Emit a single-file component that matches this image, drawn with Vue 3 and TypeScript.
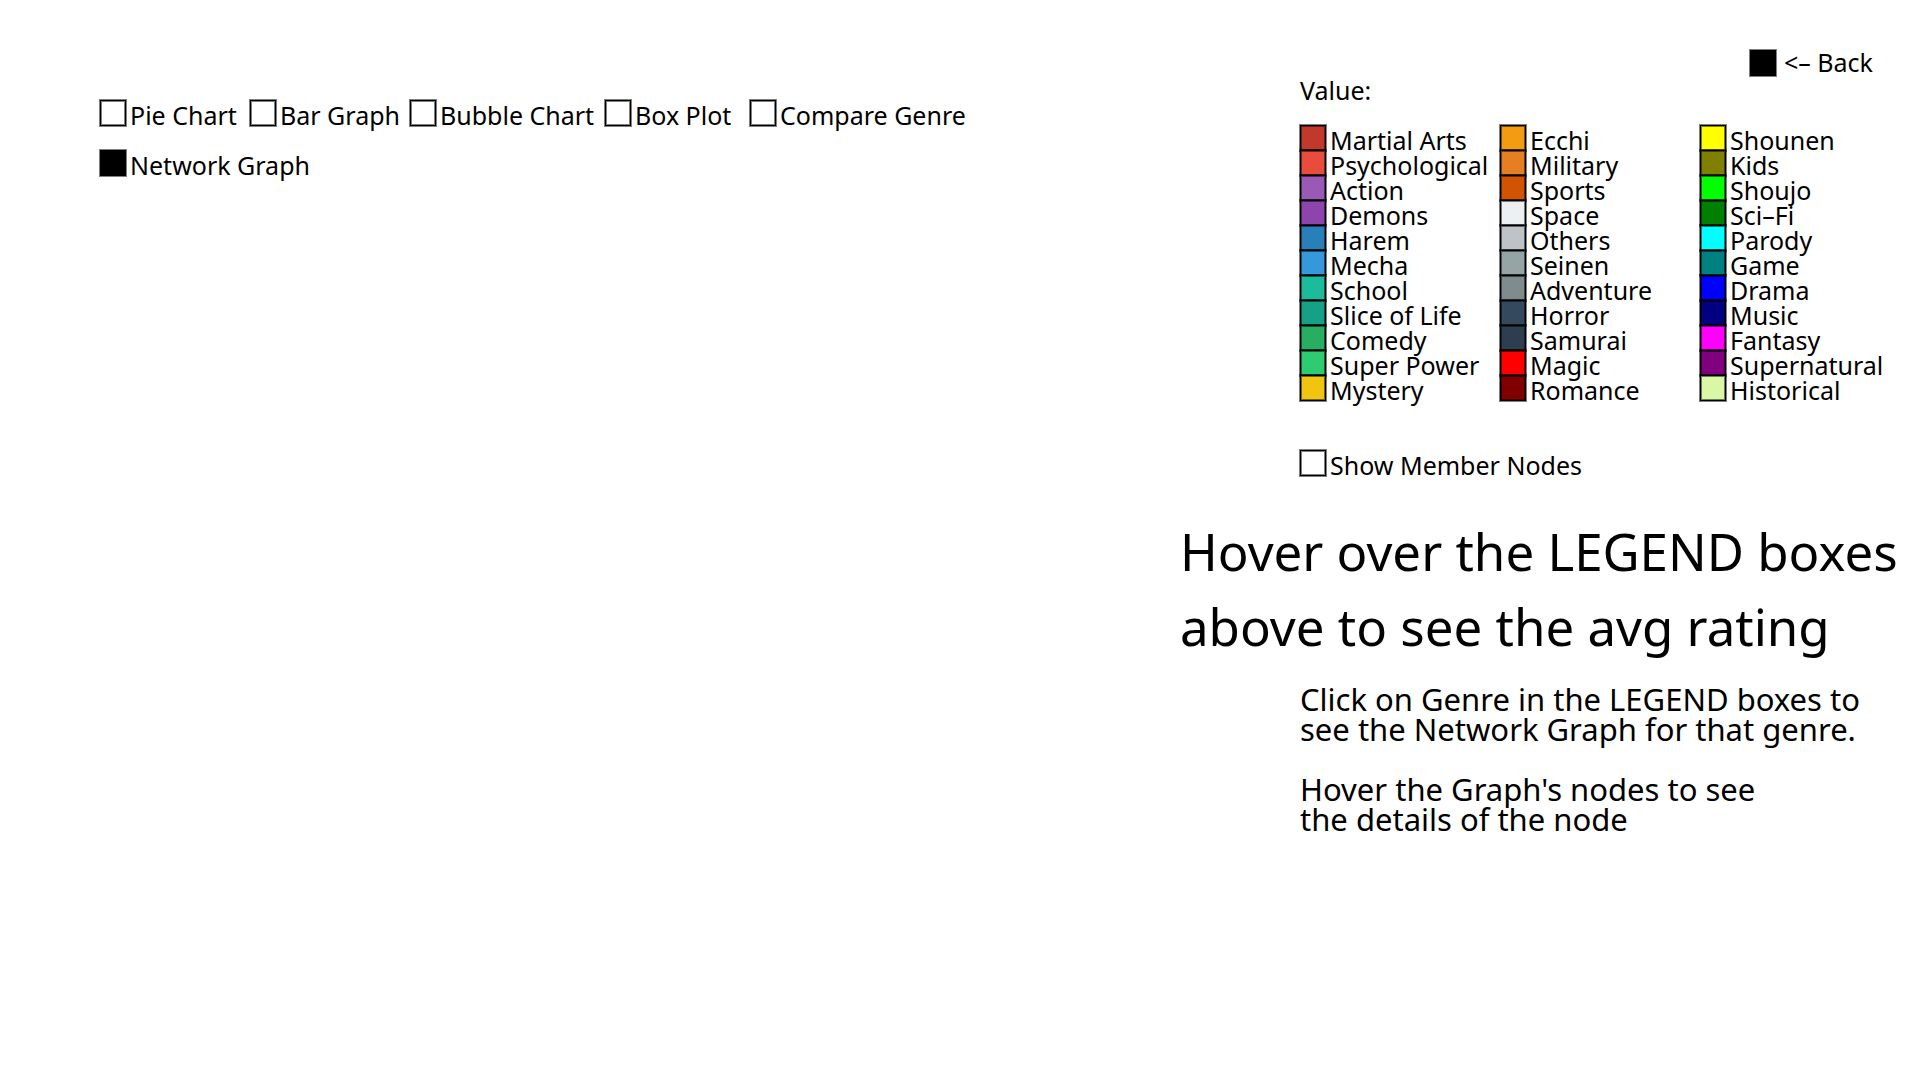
<script setup lang="ts">
import { ref } from 'vue'

interface Genre {
  name: string
  color: string
}

const charts = ['Pie Chart', 'Bar Graph', 'Bubble Chart', 'Box Plot', 'Compare Genre', 'Network Graph']
const chart = ref('Network Graph')
const showMembers = ref(false)
const selectedGenre = ref<string | null>(null)

const legend: Genre[][] = [
  [
    { name: 'Martial Arts', color: '#c0392b' },
    { name: 'Psychological', color: '#e74c3c' },
    { name: 'Action', color: '#9b59b6' },
    { name: 'Demons', color: '#8e44ad' },
    { name: 'Harem', color: '#2980b9' },
    { name: 'Mecha', color: '#3498db' },
    { name: 'School', color: '#1abc9c' },
    { name: 'Slice of Life', color: '#16a085' },
    { name: 'Comedy', color: '#27ae60' },
    { name: 'Super Power', color: '#2ecc71' },
    { name: 'Mystery', color: '#f1c40f' },
  ],
  [
    { name: 'Ecchi', color: '#f39c12' },
    { name: 'Military', color: '#e67e22' },
    { name: 'Sports', color: '#d35400' },
    { name: 'Space', color: '#ecf0f1' },
    { name: 'Others', color: '#bdc3c7' },
    { name: 'Seinen', color: '#95a5a6' },
    { name: 'Adventure', color: '#7f8c8d' },
    { name: 'Horror', color: '#34495e' },
    { name: 'Samurai', color: '#2c3e50' },
    { name: 'Magic', color: '#ff0000' },
    { name: 'Romance', color: '#800000' },
  ],
  [
    { name: 'Shounen', color: '#ffff00' },
    { name: 'Kids', color: '#808000' },
    { name: 'Shoujo', color: '#00ff00' },
    { name: 'Sci–Fi', color: '#008000' },
    { name: 'Parody', color: '#00ffff' },
    { name: 'Game', color: '#008080' },
    { name: 'Drama', color: '#0000ff' },
    { name: 'Music', color: '#000080' },
    { name: 'Fantasy', color: '#ff00ff' },
    { name: 'Supernatural', color: '#800080' },
    { name: 'Historical', color: '#daf7a6' },
  ],
]
</script>

<template>
  <div class="page">
    <main class="stage">
      <div class="charts" role="radiogroup" aria-label="Chart type">
        <label v-for="name in charts" :key="name" class="option">
          <input v-model="chart" type="radio" name="chart" class="box" :value="name" />
          <span>{{ name }}</span>
        </label>
      </div>
    </main>

    <aside class="side">
      <button type="button" class="back">
        <span class="box filled"></span>
        <span>&lt;– Back</span>
      </button>

      <section class="indent">
        <p class="value">Value:</p>
        <div class="legend">
          <ul v-for="(column, i) in legend" :key="i" class="genres">
            <li v-for="genre in column" :key="genre.name">
              <button type="button" class="genre" @click="selectedGenre = genre.name">
                <span class="box" :style="{ backgroundColor: genre.color }"></span>
                <span>{{ genre.name }}</span>
              </button>
            </li>
          </ul>
        </div>
        <label class="option members">
          <input v-model="showMembers" type="checkbox" class="box" />
          <span>Show Member Nodes</span>
        </label>
      </section>

      <h1 class="hint">Hover over the LEGEND boxes<br />above to see the avg rating</h1>

      <section class="indent help">
        <p>Click on Genre in the LEGEND boxes to<br />see the Network Graph for that genre.</p>
        <p>Hover the Graph's nodes to see<br />the details of the node</p>
      </section>
    </aside>
  </div>
</template>

<style>
body {
  margin: 0;
  background: #fff;
}
</style>

<style scoped>
.page {
  display: grid;
  grid-template-columns: minmax(0, 1fr) 740px;
  min-height: 100vh;
  color: #000;
  font-family: 'Lucida Sans', 'Lucida Grande', 'Noto Sans', sans-serif;
  font-size: 25px;
  line-height: 25px;
  white-space: nowrap;
}

p,
h1,
ul {
  margin: 0;
  padding: 0;
}

button {
  padding: 0;
  border: 0;
  background: none;
  color: inherit;
  font: inherit;
  cursor: pointer;
}

.stage {
  padding: 100px 0 0 100px;
}

.charts {
  display: grid;
  grid-template-columns: 150px 160px 195px 145px 1fr;
  row-gap: 24px;
}

.option,
.genre,
.back {
  display: flex;
  align-items: flex-start;
  gap: 4px;
}

.option > span:last-child,
.genre > span:last-child {
  padding-top: 3px;
}

.option {
  height: 26px;
}

/* Black outline with a soft edge on both sides */
.box {
  flex: none;
  box-sizing: border-box;
  width: 26px;
  height: 26px;
  margin: 0;
  appearance: none;
  border: 1px solid #000;
  background: #fff;
  box-shadow:
    0 0 0 1px rgba(0, 0, 0, 0.5),
    inset 0 0 0 1px rgba(0, 0, 0, 0.5);
}

.box:checked,
.filled {
  background: #000;
}

.side {
  padding-top: 50px;
}

.back {
  gap: 8px;
  height: 26px;
  margin-left: 570px;
}

.indent {
  padding-left: 120px;
}

.value {
  padding-top: 2px;
}

.legend {
  display: grid;
  grid-template-columns: 200px 200px 1fr;
  padding-top: 22px;
}

.genres {
  list-style: none;
}

.genre {
  height: 25px;
}

.members {
  padding-top: 50px;
}

.hint {
  padding-top: 38px;
  font-size: 51px;
  font-weight: 400;
  line-height: 75px;
}

.help {
  display: grid;
  gap: 30px;
  padding-top: 20px;
  font-size: 31px;
  line-height: 30px;
}
</style>
